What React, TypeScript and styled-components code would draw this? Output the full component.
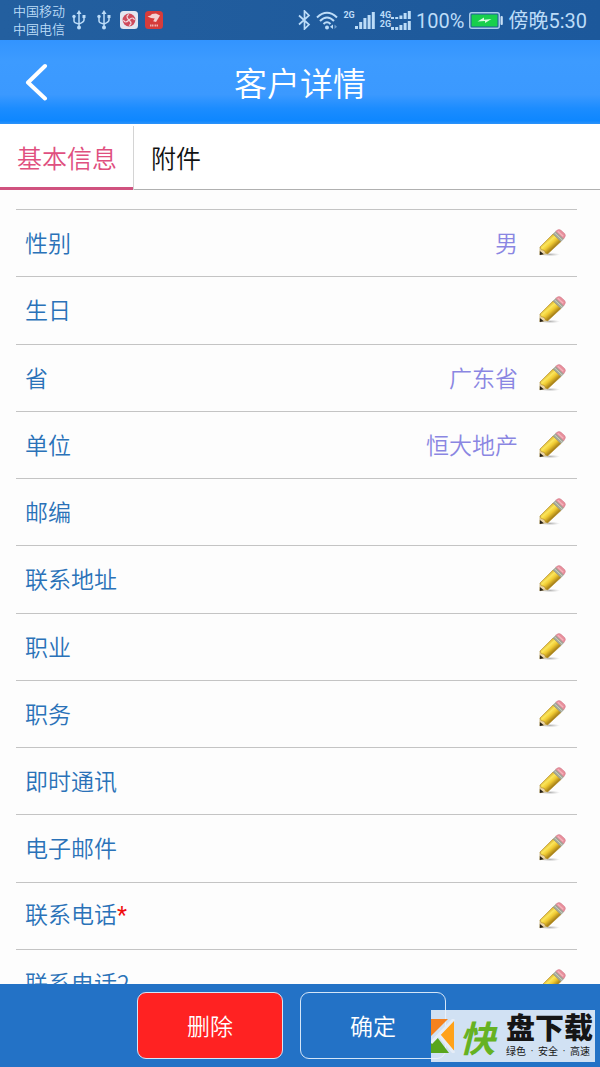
import React, { useState } from 'react';
import styled, { createGlobalStyle } from 'styled-components';

const GlobalStyle = createGlobalStyle`
  * { box-sizing: border-box; }
  html, body { margin: 0; padding: 0; }
  body {
    background: #fdfdfd;
    font-family: "Noto Sans CJK SC", sans-serif;
    font-weight: 350;
  }
  button { font: inherit; padding: 0; margin: 0; cursor: pointer; }
`;

const Screen = styled.div`
  display: flex;
  flex-direction: column;
  height: 100vh;
  overflow: hidden;
`;

const StatusBar = styled.div`
  flex: none;
  display: flex;
  align-items: center;
  justify-content: space-between;
  height: 40px;
  padding: 0 13px;
  color: #bcdcf8;
  background: linear-gradient(90deg, #235f9f, #1c589b);
`;

const StatusGroup = styled.div<{ $gap: number }>`
  display: flex;
  align-items: center;
  gap: ${(p) => p.$gap}px;
`;

const Carriers = styled.div`
  font-size: 13px;
  line-height: 18px;
  white-space: nowrap;
  margin-right: -2px;
`;

const StatusText = styled.span`
  padding-top: 2px;
  font-family: Roboto, "Noto Sans CJK SC", sans-serif;
  font-size: 20px;
  line-height: 24px;
  font-weight: 400;
  white-space: nowrap;
`;

const NetworkTag = styled.span`
  font-family: Roboto, sans-serif;
  font-size: 9px;
  line-height: 9px;
  font-weight: 700;
  display: flex;
  flex-direction: column;
`;

const Signal = styled.span<{ $align: string }>`
  display: flex;
  align-items: ${(p) => p.$align};
`;

const Header = styled.header`
  flex: none;
  display: grid;
  grid-template-columns: 72px 1fr 72px;
  align-items: center;
  height: 84px;
  color: #fff;
  background: linear-gradient(180deg, #3294ff 0%, #3d9bff 25%, #3b99ff 65%, #1b8cff 82%, #0e87ff 96%, #2d93f8 100%);
`;

const BackButton = styled.button`
  display: flex;
  align-items: center;
  height: 84px;
  padding-left: 24px;
  border: 0;
  background: none;
  color: inherit;
`;

const Title = styled.h1`
  margin: 0;
  font-size: 33px;
  line-height: 48px;
  font-weight: 350;
  text-align: center;
`;

const Tabs = styled.div`
  flex: none;
  display: flex;
  height: 66px;
  padding-top: 2px;
  background: #fff;
  border-bottom: 1px solid #b0b0b0;
`;

const Tab = styled.button<{ $active: boolean }>`
  height: 64px;
  padding: 0 16px 2px 17px;
  border: 0;
  border-right: 1px solid ${(p) => (p.$active ? '#d4d4d4' : 'transparent')};
  background: ${(p) => (p.$active ? 'linear-gradient(#d0527f, #d0527f) bottom / 100% 3px no-repeat' : 'none')};
  color: ${(p) => (p.$active ? '#e0507f' : '#111')};
  font-size: 25px;
  line-height: 36px;
`;

const Content = styled.main`
  flex: 1;
  min-height: 0;
  overflow-y: auto;
  scrollbar-width: none;
  padding: 19px 23px 0 16px;
`;

const FieldList = styled.ul`
  display: grid;
  grid-auto-rows: 1fr;
  min-height: 807px;
  margin: 0;
  padding: 0;
  list-style: none;
`;

const FieldRow = styled.li`
  display: flex;
  align-items: center;
  padding: 0 11px 0 9px;
  border-top: 1px solid #c4c4c4;
  font-size: 23px;
  line-height: 34px;
`;

const FieldLabel = styled.span`
  flex: 1;
  padding-bottom: 2px;
  color: #2a72b8;
`;

const Required = styled.span`
  color: #f00d0d;
  font-family: Roboto, sans-serif;
  font-weight: 400;
`;

const FieldValue = styled.span`
  padding-bottom: 2px;
  margin-right: 21px;
  color: #8a86e2;
`;

const EditButton = styled.button`
  display: flex;
  border: 0;
  background: none;
`;

const Footer = styled.footer`
  flex: none;
  position: relative;
  display: flex;
  justify-content: center;
  gap: 17px;
  padding: 8px 17px 8px 0;
  background: #2372c6;
`;

const ActionButton = styled.button<{ $danger?: boolean }>`
  width: 146px;
  height: 67px;
  padding-bottom: 2px;
  border: 1px solid #d5e6f8;
  border-radius: 9px;
  background: ${(p) => (p.$danger ? '#ff2222' : 'transparent')};
  color: #fff;
  font-size: 23px;
  line-height: 34px;
`;

const Badge = styled.div`
  position: absolute;
  right: 5px;
  bottom: 5px;
  display: flex;
  align-items: center;
  width: 164px;
  height: 52px;
  background: rgba(236, 241, 249, 0.87);
  white-space: nowrap;
`;

const BadgeLead = styled.span`
  width: 45px;
  padding-left: 4px;
  color: #66b222;
  font-size: 36px;
  line-height: 44px;
  font-weight: 700;
  font-style: italic;
`;

const BadgeWords = styled.span`
  display: flex;
  flex-direction: column;
  padding-left: 6px;
  color: #151515;
  font-family: Roboto, "Noto Sans CJK SC", sans-serif;
`;

const BadgeName = styled.span`
  font-size: 29px;
  line-height: 32px;
  font-weight: 900;
`;

const BadgeNote = styled.span`
  display: flex;
  justify-content: space-between;
  width: 84px;
  font-size: 10px;
  line-height: 14px;
  font-weight: 400;
`;

const UsbIcon = () => (
  <svg width="14" height="20" viewBox="0 0 14 20" fill="none" stroke="currentColor" strokeWidth="1.5" aria-hidden="true">
    <path d="M7 3v14M2 7v4q0 2 5 3M12 7v3q0 2-5 4" />
    <path d="M7 0l2.500 4h-5zM10.500 5h3v3h-3z" fill="currentColor" stroke="none" />
    <circle cx="2" cy="6.500" r="1.700" fill="currentColor" stroke="none" />
    <circle cx="7" cy="17.500" r="2" fill="currentColor" stroke="none" />
  </svg>
);

const SwirlAppIcon = () => (
  <svg width="18" height="18" viewBox="0 0 18 18" aria-hidden="true">
    <rect width="18" height="18" rx="3.500" fill="#e4e6f0" />
    <circle cx="9" cy="9" r="6.400" fill="#cf4a5c" />
    <path d="M9 9q-4-4 0-5.500M9 9q4-4 5.500 0M9 9q4 4 0 5.500M9 9q-4 4-5.500 0" fill="none" stroke="#f1d5dc" strokeWidth="1.200" />
  </svg>
);

const RedAppIcon = () => (
  <svg width="18" height="18" viewBox="0 0 18 18" aria-hidden="true">
    <rect width="18" height="18" rx="3.500" fill="#d63c3b" />
    <path d="M2.500 5.500l3-1 1.500-1.500 4-.5 4 2-1.500 2.500-2.500 4-2.800-.7 1.500-2.800-3.700-.5z" fill="#f3d2d2" />
    <path d="M5 14.500h3.500M9.500 14.500h3.500" stroke="#efb0b0" strokeWidth="2" strokeDasharray="1.500 .5" />
  </svg>
);

const BluetoothIcon = () => (
  <svg width="13" height="20" viewBox="0 0 13 20" fill="none" stroke="currentColor" strokeWidth="1.700" aria-hidden="true">
    <path d="M1 5.500l10 9L6.500 19V1L11 5.500l-10 9" />
  </svg>
);

const WifiIcon = () => (
  <svg width="22" height="19" viewBox="0 0 22 19" fill="none" stroke="currentColor" strokeWidth="2" aria-hidden="true">
    <path d="M1 6.500Q11 -3 21 6.500M4 10q7-7 14 0M7.500 13q3.500-3.500 7 0" />
    <circle cx="11" cy="16.500" r="2" fill="currentColor" stroke="none" />
    <path d="M17 13.500v4.500l-3-2.200z" fill="currentColor" stroke="none" />
    <path d="M18.500 13.500v4.500l2.500-2.200z" fill="currentColor" stroke="none" opacity=".5" />
  </svg>
);

const BarsIcon = () => (
  <svg width="20" height="18" viewBox="0 0 20 18" fill="currentColor" aria-hidden="true">
    <path d="M0 15h3v3H0zM4.200 11h3v7h-3zM8.400 7h3v11h-3zM12.600 4h3v14h-3zM16.800 1h3v17h-3z" />
  </svg>
);

const DoubleBarsIcon = () => (
  <svg width="20" height="19" viewBox="0 0 20 19" fill="currentColor" aria-hidden="true">
    <path d="M0 6h3v2H0zM4.200 6h3v2h-3zM8.400 4.500h3V8h-3zM12.600 2h3v6h-3zM16.800 0h3v8h-3zM0 16h3v3H0zM4.200 16h3v3h-3zM8.400 14h3v5h-3zM12.600 12h3v7h-3zM16.800 10h3v9h-3z" />
  </svg>
);

const BatteryIcon = () => (
  <svg width="34" height="17" viewBox="0 0 34 17" aria-hidden="true">
    <rect x=".75" y=".75" width="29.500" height="15.500" rx="2" fill="none" stroke="#a9cbea" strokeWidth="1.500" />
    <rect x="2.500" y="2.500" width="26" height="12" fill="#18cf4d" />
    <path d="M8.500 9.500l6.500-4v2.200l7.500-.7-6.500 4V9z" fill="#d9fbe0" />
    <rect x="31.500" y="4" width="2.300" height="9" rx="1" fill="#c8e0f5" />
  </svg>
);

const BackIcon = () => (
  <svg width="24" height="38" viewBox="0 0 24 38" fill="none" stroke="currentColor" strokeWidth="4" strokeLinecap="round" strokeLinejoin="round" aria-hidden="true">
    <path d="M21 3L4 19.500 21 35.500" />
  </svg>
);

const PencilIcon = () => (
  <svg width="27" height="28" viewBox="0 0 27 28" aria-hidden="true">
    <defs>
      <linearGradient id="pencilBody" gradientUnits="userSpaceOnUse" x1="7" y1="11" x2="14" y2="19">
        <stop offset="0" stopColor="#d9b02c" />
        <stop offset=".3" stopColor="#fbe65c" />
        <stop offset=".6" stopColor="#f0ca32" />
        <stop offset="1" stopColor="#a98218" />
      </linearGradient>
      <radialGradient id="pencilShade">
        <stop offset="0" stopColor="#777" stopOpacity=".55" />
        <stop offset="1" stopColor="#999" stopOpacity="0" />
      </radialGradient>
    </defs>
    <ellipse cx="11" cy="25.500" rx="10" ry="1.800" fill="url(#pencilShade)" />
    <path d="M1 18L.8 25.800l8-1.300z" fill="#ecd6a8" stroke="#b0913f" strokeWidth=".5" />
    <path d="M.9 22L.8 25.900l4-.7z" fill="#252018" />
    <path d="M1 18L14 5l8 7.500L8.800 24.800l-2.300-.8-1.200-2.600-3-.7z" fill="url(#pencilBody)" stroke="#b08a24" strokeWidth=".6" />
    <path d="M14 5l2.800-2.700 8 7.500-2.800 2.700z" fill="#a3a898" stroke="#8b8e80" strokeWidth=".4" />
    <path d="M15.500 3.800l7.800 7.300" stroke="#d5d8cc" strokeWidth=".8" />
    <path d="M16.800 2.300L18 1.300q2-1.600 4 0l3.600 3.200q1.600 1.800 0 3.900l-.8 1.400z" fill="#e88f9c" stroke="#cf7686" strokeWidth=".5" />
    <path d="M18.800 2.300l5.400 5" stroke="#f3b4bc" strokeWidth="1.400" />
  </svg>
);

const BadgeMark = () => (
  <svg width="24" height="34" viewBox="0 0 24 34" aria-hidden="true">
    <path d="M0 0h17L0 17z" fill="#f5821f" />
    <path d="M23 1v31L9 16z" fill="#ffa21a" />
    <path d="M0 24l6-6 12 16H0z" fill="#58a51d" />
    <path d="M23 0L0 24M8 16l15 18" stroke="#e6edf7" strokeWidth="3" />
  </svg>
);

interface Field {
  label: string;
  value?: string;
  required?: boolean;
}

const fields: Field[] = [
  { label: '性别', value: '男' },
  { label: '生日' },
  { label: '省', value: '广东省' },
  { label: '单位', value: '恒大地产' },
  { label: '邮编' },
  { label: '联系地址' },
  { label: '职业' },
  { label: '职务' },
  { label: '即时通讯' },
  { label: '电子邮件' },
  { label: '联系电话', required: true },
  { label: '联系电话2' },
];

const tabs = ['基本信息', '附件'];

export default function App() {
  const [active, setActive] = useState(0);
  return (
    <>
      <GlobalStyle />
      <Screen>
        <StatusBar>
          <StatusGroup $gap={9}>
            <Carriers>
              <div>中国移动</div>
              <div>中国电信</div>
            </Carriers>
            <StatusGroup $gap={11}>
              <UsbIcon />
              <UsbIcon />
            </StatusGroup>
            <StatusGroup $gap={7}>
              <SwirlAppIcon />
              <RedAppIcon />
            </StatusGroup>
          </StatusGroup>
          <StatusGroup $gap={5}>
            <BluetoothIcon />
            <WifiIcon />
            <Signal $align="flex-start">
              <NetworkTag>2G</NetworkTag>
              <BarsIcon />
            </Signal>
            <Signal $align="center">
              <NetworkTag>
                <span>4G</span>
                <span>2G</span>
              </NetworkTag>
              <DoubleBarsIcon />
            </Signal>
            <StatusText>100%</StatusText>
            <BatteryIcon />
            <StatusText>傍晚5:30</StatusText>
          </StatusGroup>
        </StatusBar>
        <Header>
          <BackButton type="button" aria-label="返回">
            <BackIcon />
          </BackButton>
          <Title>客户详情</Title>
        </Header>
        <Tabs role="tablist">
          {tabs.map((name, i) => (
            <Tab key={name} type="button" role="tab" aria-selected={i === active} $active={i === active} onClick={() => setActive(i)}>
              {name}
            </Tab>
          ))}
        </Tabs>
        <Content>
          <FieldList>
            {fields.map((field) => (
              <FieldRow key={field.label}>
                <FieldLabel>
                  {field.label}
                  {field.required && <Required>*</Required>}
                </FieldLabel>
                {field.value && <FieldValue>{field.value}</FieldValue>}
                <EditButton type="button" aria-label={`编辑${field.label}`}>
                  <PencilIcon />
                </EditButton>
              </FieldRow>
            ))}
          </FieldList>
        </Content>
        <Footer>
          <ActionButton type="button" $danger>
            删除
          </ActionButton>
          <ActionButton type="button">确定</ActionButton>
          <Badge>
            <BadgeMark />
            <BadgeLead>快</BadgeLead>
            <BadgeWords>
              <BadgeName>盘下载</BadgeName>
              <BadgeNote>
                <span>绿色</span>
                <span>·</span>
                <span>安全</span>
                <span>·</span>
                <span>高速</span>
              </BadgeNote>
            </BadgeWords>
          </Badge>
        </Footer>
      </Screen>
    </>
  );
}
